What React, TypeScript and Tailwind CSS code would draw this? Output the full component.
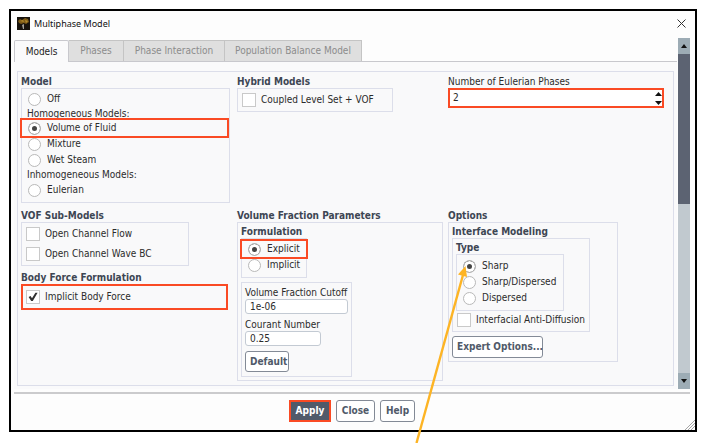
import React from "react";
import clsx from "clsx";

type BoxProps = {
  children: React.ReactNode;
  className?: string;
};

const Box = ({ children, className }: BoxProps) => (
  <div className={clsx("border border-[#dcdeea]", className)}>{children}</div>
);

type GroupProps = BoxProps & { title: string };

const Group = ({ title, children, className }: GroupProps) => (
  <fieldset className="min-w-0">
    <legend className="h-3 leading-3 font-bold text-[#3d4653] whitespace-nowrap">{title}</legend>
    <Box className={className}>{children}</Box>
  </fieldset>
);

type OptionProps = {
  label: string;
  name?: string;
  checked?: boolean;
  className?: string;
};

const Radio = ({ label, name, checked, className }: OptionProps) => (
  <label className={clsx("flex h-4 items-center gap-[6px] pl-[6px] whitespace-nowrap", className)}>
    <input
      type="radio"
      name={name}
      defaultChecked={checked}
      className="size-[13px] shrink-0 appearance-none rounded-full border border-[#b9b9b9] bg-white checked:bg-[#444444] checked:shadow-[inset_0_0_0_3px_white]"
    />
    {label}
  </label>
);

const Check = ({ label, checked, className }: OptionProps) => (
  <label className={clsx("flex items-center gap-[5px] pl-1 whitespace-nowrap", className)}>
    <span className="grid shrink-0">
      <input
        type="checkbox"
        defaultChecked={checked}
        className="peer col-start-1 row-start-1 size-[14px] appearance-none border border-[#c9c9c9] bg-white"
      />
      <svg
        viewBox="0 0 14 14"
        className="pointer-events-none invisible col-start-1 row-start-1 size-[14px] peer-checked:visible"
      >
        <path d="M2.6 7 L4.6 6 L6 8.2 L9.4 2.8 L11.6 2.8 L6.8 11 L5.2 11 Z" fill="#2f2f2f" />
      </svg>
    </span>
    {label}
  </label>
);

const Button = ({ children, className }: BoxProps) => (
  <button type="button" className={clsx("px-1 font-bold whitespace-nowrap", className)}>
    {children}
  </button>
);

const outlined = "rounded-[3px] border border-[#838a96] bg-white text-[#505a69]";

const TitleBar = () => (
  <header className="flex h-[27px] items-center justify-between pr-[9px] pb-[2px] pl-[6px]">
    <div className="flex items-center gap-1">
      <svg viewBox="0 0 13 13" className="size-[13px]">
        <rect width="13" height="13" fill="#17130d" />
        <path d="M1 4 L3 2 L5 3 L8 1 L11 2 L12 5 L9 7 L7 6 L4 7 L2 6 Z" fill="#7d5a16" />
        <path d="M3 4 L6 3 L7 5 Z M8 3 L11 4 L9 6 Z" fill="#b28a2c" />
        <path d="M5 8 L7 7 L7 12 L6 12 Z" fill="#a5a29a" />
      </svg>
      <h1 className="font-['Noto_Sans',sans-serif] text-[9px] text-[#111111]">Multiphase Model</h1>
    </div>
    <button type="button" aria-label="Close window">
      <svg viewBox="0 0 9 9" className="size-[9px]" fill="none" stroke="#333333">
        <path d="M0.5 0.5 L8.5 8.5 M8.5 0.5 L0.5 8.5" />
      </svg>
    </button>
  </header>
);

const tabs = [
  { label: "Phases", width: "w-[55px]" },
  { label: "Phase Interaction", width: "w-[101px]" },
  { label: "Population Balance Model", width: "w-[137px]" },
];

const Tabs = () => (
  <div role="tablist" className="flex h-[22px] items-stretch border-b border-[#c8c8cd] whitespace-nowrap">
    <button
      type="button"
      role="tab"
      aria-selected="true"
      className="-mb-px w-[55px] rounded-t-[2px] border border-b-0 border-[#c8c8cd] bg-[#fafafb] text-[#222222]"
    >
      Models
    </button>
    {tabs.map((tab) => (
      <button
        key={tab.label}
        type="button"
        role="tab"
        aria-selected="false"
        className={clsx("border-t border-r border-[#c4c4c4] bg-[#dfdfdf] text-[#8c8c8c]", tab.width)}
      >
        {tab.label}
      </button>
    ))}
  </div>
);

const ScrollBar = () => (
  <div className="flex w-3 shrink-0 flex-col bg-[#c1c9cf]">
    <button type="button" aria-label="Scroll up" className="grid h-4 place-items-center bg-[#9dacb5]">
      <svg viewBox="0 0 6 4" className="h-1 w-[6px]">
        <path d="M3 0 L6 4 H0 Z" fill="#111111" />
      </svg>
    </button>
    <div className="h-[150px] bg-[#5c6372]" />
    <button type="button" aria-label="Scroll down" className="mt-auto grid h-4 place-items-center bg-[#9dacb5]">
      <svg viewBox="0 0 6 4" className="h-1 w-[6px]">
        <path d="M3 4 L6 0 H0 Z" fill="#111111" />
      </svg>
    </button>
  </div>
);

const ModelColumn = () => (
  <Group title="Model" className="w-[209px] pt-[2px] pb-1">
    <Radio name="model" label="Off" />
    <p className="h-[13px] pl-[5px] leading-[13px]">Homogeneous Models:</p>
    <Radio name="model" label="Volume of Fluid" checked className="mr-[2px] outline-2 outline-[#fa4a24]" />
    <Radio name="model" label="Mixture" />
    <Radio name="model" label="Wet Steam" />
    <p className="h-[14px] pl-[5px] leading-[14px]">Inhomogeneous Models:</p>
    <Radio name="model" label="Eulerian" />
  </Group>
);

const PhaseCount = () => (
  <div className="mr-[9px]">
    <label htmlFor="phases" className="block h-3 leading-3">
      Number of Eulerian Phases
    </label>
    <div className="flex h-5 items-center border-2 border-[#fa4a24] bg-white">
      <input id="phases" defaultValue="2" className="min-w-0 flex-1 px-[3px] outline-none" />
      <div className="flex flex-col gap-[5px]">
        <button type="button" aria-label="More phases">
          <svg viewBox="0 0 7 4" className="h-1 w-[7px]">
            <path d="M3.5 0 L7 4 H0 Z" fill="#111111" />
          </svg>
        </button>
        <button type="button" aria-label="Fewer phases">
          <svg viewBox="0 0 7 4" className="h-1 w-[7px]">
            <path d="M3.5 4 L7 0 H0 Z" fill="#111111" />
          </svg>
        </button>
      </div>
    </div>
  </div>
);

const SubModels = () => (
  <div className="flex flex-col gap-[6px]">
    <Group title="VOF Sub-Models" className="flex w-[168px] flex-col gap-1 py-[3px]">
      <Check label="Open Channel Flow" />
      <Check label="Open Channel Wave BC" />
    </Group>
    <fieldset>
      <legend className="h-3 leading-3 font-bold text-[#3d4653]">Body Force Formulation</legend>
      <div className="w-[207px] border-2 border-[#fa4a24] py-[3px]">
        <Check label="Implicit Body Force" checked className="-ml-px" />
      </div>
    </fieldset>
  </div>
);

const fieldClass = "block h-[15px] rounded-[3px] border border-[#c3cad3] bg-white px-1 outline-none";

const FractionParameters = () => (
  <Group title="Volume Fraction Parameters" className="flex w-[206px] flex-col items-start gap-1 p-[3px]">
    <Group title="Formulation" className="w-[66px] pt-[2px] pb-1">
      <Radio name="formulation" label="Explicit" checked className="outline-2 outline-[#fa4a24]" />
      <Radio name="formulation" label="Implicit" />
    </Group>
    <Box className="w-[111px] px-[3px] pt-[3px] pb-1">
      <label htmlFor="cutoff" className="block h-[13px] leading-[13px] whitespace-nowrap">
        Volume Fraction Cutoff
      </label>
      <input id="cutoff" defaultValue="1e-06" className={clsx(fieldClass, "w-full")} />
      <label htmlFor="courant" className="mt-1 block h-[13px] leading-[13px] whitespace-nowrap">
        Courant Number
      </label>
      <input id="courant" defaultValue="0.25" className={clsx(fieldClass, "w-[76px]")} />
      <Button className={clsx("mt-[5px] block h-[21px] w-11", outlined)}>Default</Button>
    </Box>
  </Group>
);

const Options = () => (
  <Group title="Options" className="flex w-[170px] flex-col items-start gap-1 p-[3px]">
    <Group title="Interface Modeling" className="w-[138px] p-[3px]">
      <Group title="Type" className="w-[108px] pt-[3px] pb-1">
        <Radio name="type" label="Sharp" checked />
        <Radio name="type" label="Sharp/Dispersed" />
        <Radio name="type" label="Dispersed" />
      </Group>
      <Check label="Interfacial Anti-Diffusion" className="mt-px -ml-[3px]" />
    </Group>
    <Button className={clsx("h-[22px] w-[91px]", outlined)}>Expert Options...</Button>
  </Group>
);

const Pointer = () => (
  <svg
    viewBox="0 0 60 183"
    className="pointer-events-none absolute top-[260px] left-[410px] h-[183px] w-[60px]"
  >
    <path d="M6.5 183 L53 15" stroke="#fdb424" strokeWidth="2.4" />
    <path d="M55.5 6 L57 17 L48 14.6 Z" fill="#fdb424" />
  </svg>
);

const App = () => {
  return (
    <main className="relative bg-white pt-[9px] pr-[6px] pb-[11px] pl-[9px] font-['DejaVu_Sans_Condensed','DejaVu_Sans',sans-serif] text-[10px] leading-4 text-[#2b2b2b]">
      <div className="border-2 border-black bg-[#fdfdfd]">
        <TitleBar />
        <div className="flex gap-px pr-[5px] pl-[3px]">
          <div className="min-w-0 flex-1 pt-[2px]">
            <Tabs />
            <div className="bg-[#fafafb] pt-[9px] pr-[3px] pb-[3px] pl-[3px]">
              <Box className="grid grid-cols-[216px_211px_1fr] gap-y-[7px] bg-[#f9f9fa] pt-1 pb-1 pl-[3px]">
                <ModelColumn />
                <Group title="Hybrid Models" className="w-[156px] py-[3px]">
                  <Check label="Coupled Level Set + VOF" />
                </Group>
                <PhaseCount />
                <SubModels />
                <FractionParameters />
                <Options />
              </Box>
            </div>
          </div>
          <ScrollBar />
        </div>
        <footer className="mt-[3px] mr-[5px] ml-[3px] flex justify-center gap-[5px] border-t-2 border-[#cbcbcd] pt-[6px] pb-2">
          <Button className="h-[22px] w-[42px] border-2 border-[#fa4a24] bg-[#505a6a] text-white">Apply</Button>
          <Button className={clsx("h-[22px] w-[39px]", outlined)}>Close</Button>
          <Button className={clsx("h-[22px] w-[35px]", outlined)}>Help</Button>
        </footer>
        <div className="-mt-3 flex justify-end">
          <svg viewBox="0 0 12 12" className="size-3" stroke="#a5a5a5">
            <path d="M2 12 L12 2 M5 12 L12 5 M8 12 L12 8" />
          </svg>
        </div>
      </div>
      <Pointer />
    </main>
  );
};

export default App;
